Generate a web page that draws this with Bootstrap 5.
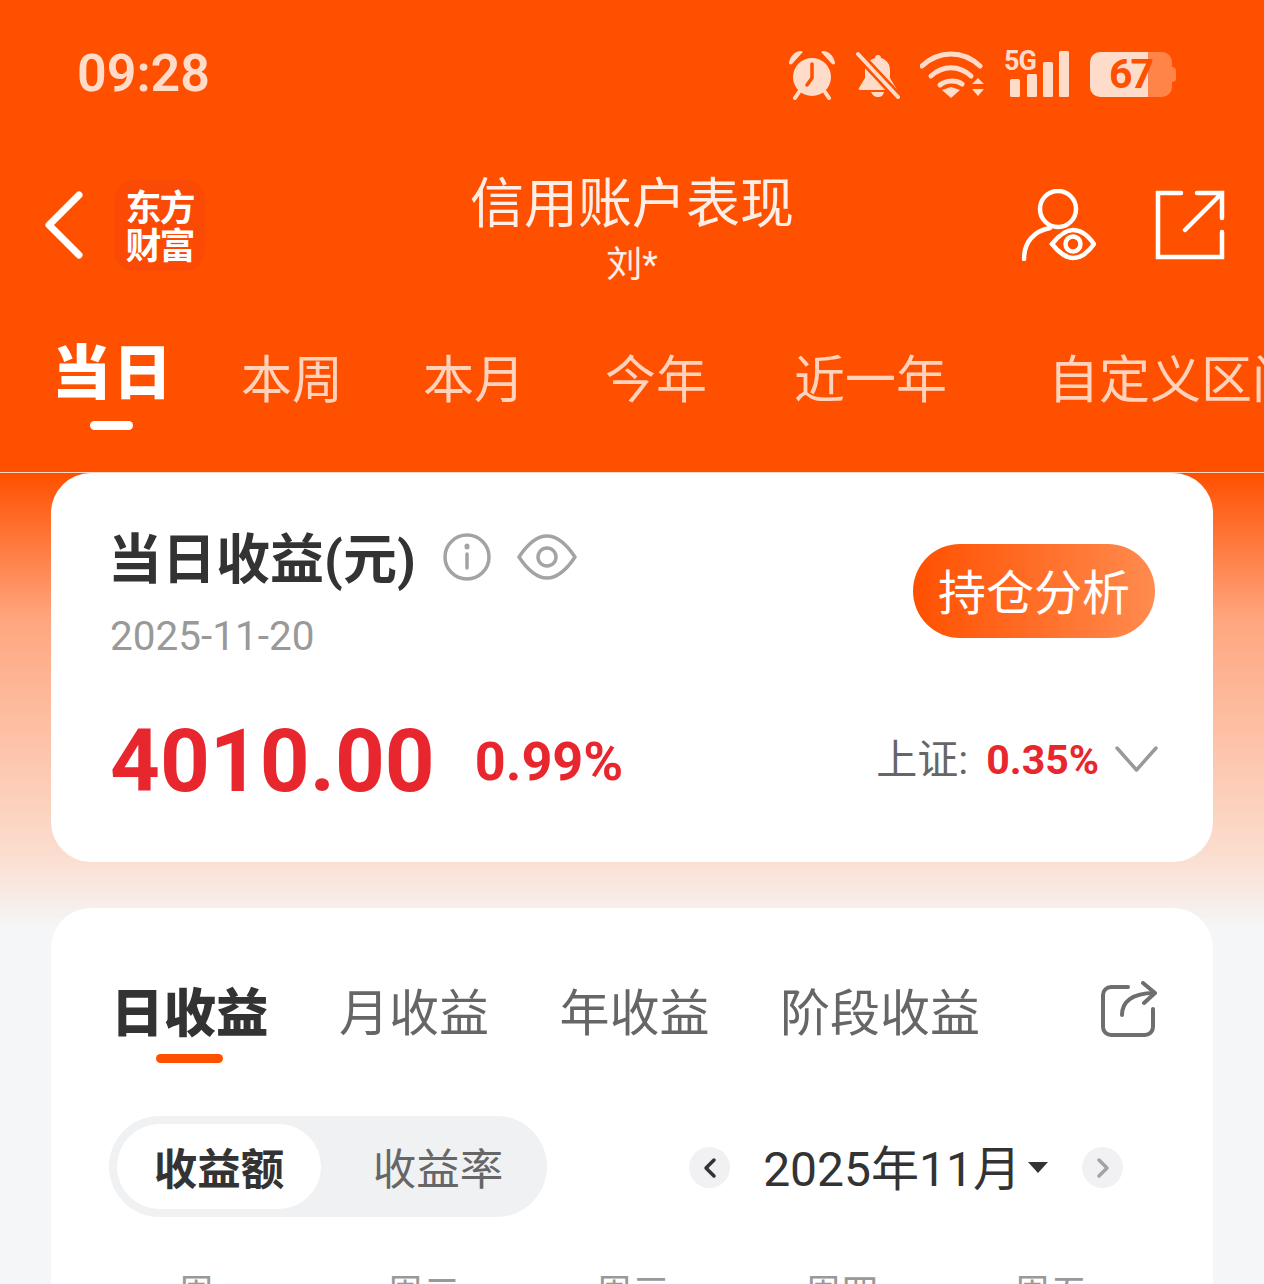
<!DOCTYPE html>
<html lang="zh-CN">
<head>
  <meta charset="UTF-8">
  <meta name="viewport" content="width=device-width, initial-scale=1.0">
  <title>信用账户表现</title>
  <link href="https://cdn.jsdelivr.net/npm/bootstrap@5.3.3/dist/css/bootstrap.min.css" rel="stylesheet">
  <style>
    html, body { height: 1284px; overflow: hidden; }
    body {
      font-family: Roboto, "Noto Sans CJK SC", sans-serif;
      background: linear-gradient(to bottom, #ff5000 473px, #ffa67f 620px, #fbdccd 850px, #f5f6f8 930px);
      color: #333;
    }
    .top-bar { height: 473px; background: #ff5000; border-bottom: 1px solid #ffd9c6; color: #fff; }
    .status-row { height: 147px; padding: 0 88px 0 77px; color: #ffdcca; }
    .clock { font-size: 52px; font-weight: 600; line-height: 1; }
    .status-icons { gap: 19px; margin-top: 2px; }
    .sig-wrap { position: relative; width: 67px; height: 46px; margin-top: -2px; }
    .sig-5g { position: absolute; left: 0; top: -3px; font-size: 27px; font-weight: 700; line-height: 27px; letter-spacing: -1px; color: #ffdcca; }
    .batt { position: relative; width: 86px; height: 45px; }
    .batt-num { position: absolute; left: 19px; top: 0; font-size: 41px; font-weight: 700; line-height: 45px; letter-spacing: -2px; color: #ff5000; }
    .title-row { height: 156px; padding: 0 39px; }
    .title-side { width: 235px; }
    .back-icon { margin-left: 5px; }
    .logo-box { width: 91px; height: 91px; margin-left: 29px; background: #fa4a05; border-radius: 20px; font-size: 36px; line-height: 38px; font-weight: 700; text-align: center; padding-top: 10px; letter-spacing: -2px; }
    .title-text { margin-top: 10px; }
    .title-main { font-size: 54px; line-height: 64px; color: #ffeee5; }
    .title-sub { font-size: 36px; line-height: 44px; margin-top: 6px; color: #ffeee5; }
    .head-share { margin-left: 59px; }
    .tab-row { height: 168px; padding: 0 0 0 52px; overflow: hidden; white-space: nowrap; color: #ffd2bb; font-size: 51px; }
    .tab-row span { display: block; line-height: 60px; margin-top: -12px; margin-right: 80px; }
    .tab-row .tab-on { font-size: 59px; font-weight: 900; letter-spacing: 2px; color: #fff; position: relative; margin-top: -26px; margin-right: 67px; }
    .tab-on::after { content: ""; position: absolute; left: 38px; top: 77px; width: 43px; height: 9px; border-radius: 5px; background: #fff; }
    .tab-row .tab-wide { margin-right: 101px; }
    .tab-row .tab-mid { margin-right: 87px; }
    .sheet { margin: 0 51px; background: #fff; border-radius: 40px; }
    .sum-card { height: 389px; padding: 55px 58px 0 59px; }
    .sum-title { font-size: 54px; font-weight: 700; line-height: 66px; margin-left: -2px; }
    .info-icon { margin: -8px 0 0 27px; }
    .seen-icon { margin: -8px 0 0 26px; }
    .sum-date { font-size: 40.5px; line-height: 48px; color: #999; margin-top: 18px; }
    .hold-btn { width: 242px; height: 94px; margin-top: 16px; border-radius: 47px; border: 0; font-size: 48px; color: #fff; background: linear-gradient(to right, #ff5000, #ff8b4f); padding: 6px 0 0; }
    .amount-row { margin-top: 51px; }
    .amount { font-size: 87px; font-weight: 700; line-height: 100px; color: #e8262e; }
    .amount-pct { font-size: 54px; font-weight: 700; color: #e8262e; margin-left: 40px; }
    .index-box { margin-right: -3px; }
    .index-label { font-size: 41px; color: #666; }
    .index-val { font-size: 41px; font-weight: 700; color: #e8262e; margin: 0 16px 0 18px; }
    .index-arrow { margin-top: -4px; }
    .chart-card { margin-top: 46px; height: 500px; padding: 0 56px 0 58px; }
    .sub-tabs { height: 208px; font-size: 50px; color: #666; padding-top: 73px; gap: 70.500px; }
    .sub-tabs > div { line-height: 66px; }
    .sub-tabs .sub-on { font-size: 52.500px; font-weight: 900; color: #333; position: relative; margin-left: 2px; }
    .sub-on::after { content: ""; position: absolute; left: 45px; top: 73px; width: 67px; height: 9px; border-radius: 5px; background: #ff5000; }
    .sub-share { margin: 0 -1px 0 0; }
    .seg { width: 438px; height: 101px; background: #f0f1f3; border-radius: 51px; padding: 8px; font-size: 43.500px; color: #666; }
    .seg-on { width: 204px; height: 85px; background: #fff; border-radius: 43px; font-weight: 700; color: #333; padding-top: 8px; }
    .seg-off { padding: 8px 0 0 16px; }
    .date-pick { padding-top: 2px; margin-right: 34px; }
    .round-btn { width: 41px; height: 41px; border-radius: 50%; background: #f1f1f3; }
    .month { font-size: 48px; line-height: 60px; padding-top: 4px; margin: 0 7px 0 33px; }
    .caret-down { width: 0; height: 0; border-left: 10px solid transparent; border-right: 10px solid transparent; border-top: 11px solid #333; margin-right: 34px; }
    .week-row { margin-top: 55px; font-size: 37px; line-height: 44px; color: #999; padding-left: 1px; }
    .week-row span { flex: 0 0 209px; text-align: center; }
  </style>
</head>
<body>

<div class="top-bar">
  <!-- status bar -->
  <div class="status-row d-flex align-items-center justify-content-between">
    <div class="clock">09:28</div>
    <div class="status-icons d-flex align-items-center">
      <svg width="48" height="50" viewBox="0 0 48 50" fill="#ffdcca">
        <path d="M1 13C2 6 7 1 13 1c2 0 2 1 1 2L4 14c-2 1-3 0-3-1zM47 13C46 6 41 1 35 1c-2 0-2 1-1 2l10 11c2 1 3 0 3-1z"/>
        <circle cx="24" cy="27" r="19"/>
        <path d="M11 42l-4 6M37 42l4 6" stroke="#ffdcca" stroke-width="4" stroke-linecap="round"/>
        <path d="M24 14v14l-5 7" fill="none" stroke="#ff5000" stroke-width="3.500" stroke-linecap="round" stroke-linejoin="round"/>
      </svg>
      <svg width="46" height="48" viewBox="0 0 46 48" fill="#ffdcca">
        <path d="M23 4c2 0 3 1 3 3 6 2 9 6 9 13v7l6 10c1 1 0 2-1 2H5c-1 0-2-1-1-2l6-10v-7c0-7 4-11 10-13 0-2 1-3 3-3z"/>
        <path d="M16 41h13c-1 4-3 5-6 5s-5-1-7-5z"/>
        <path d="M3 3l40 43" stroke="#ff5000" stroke-width="9"/>
        <path d="M3 3l40 43" stroke="#ffdcca" stroke-width="4" stroke-linecap="round"/>
      </svg>
      <svg width="65" height="48" viewBox="0 0 65 48" fill="none" stroke="#ffdcca" stroke-width="5" stroke-linecap="round">
        <path d="M2 15C19 -1 43 -1 60 15"/>
        <path d="M11 25C23 14 39 14 51 25"/>
        <path d="M20 34c6-5 16-5 22-1"/>
        <path d="M22 39l9-3 9 3-9 8z" fill="#ffdcca" stroke="none"/>
        <path d="M52 33l6-6 6 6zM52 38l6 7 6-7z" fill="#ffdcca" stroke="none"/>
      </svg>
      <div class="sig-wrap">
        <span class="sig-5g">5G</span>
        <svg class="d-block" width="67" height="46" viewBox="0 0 67 46" fill="#ffdcca">
          <rect x="6" y="28" width="10" height="18" rx="1.500"/>
          <rect x="23" y="23" width="10" height="23" rx="1.500"/>
          <rect x="39" y="11" width="10" height="35" rx="1.500"/>
          <rect x="55" y="0" width="10" height="46" rx="1.500"/>
        </svg>
      </div>
      <div class="batt">
        <svg class="d-block" width="86" height="45" viewBox="0 0 86 45">
          <path d="M0 10a10 10 0 0 1 10-10h48v45H10a10 10 0 0 1-10-10z" fill="#ffdcca"/>
          <path d="M58 0h14a10 10 0 0 1 10 10v25a10 10 0 0 1-10 10H58z" fill="#ff8448"/>
          <path d="M82 15a4 4 0 0 1 4 4v7a4 4 0 0 1-4 4z" fill="#ff8448"/>
        </svg>
        <div class="batt-num">67</div>
      </div>
    </div>
  </div>

  <!-- title -->
  <div class="title-row d-flex align-items-center justify-content-between">
    <div class="title-side d-flex align-items-center">
      <svg class="back-icon" width="41" height="68" viewBox="0 0 41 68" fill="none" stroke="#fff" stroke-width="7" stroke-linecap="round" stroke-linejoin="round">
        <path d="M35 4L5 34l30 30"/>
      </svg>
      <div class="logo-box">东方<br>财富</div>
    </div>
    <div class="title-text text-center">
      <div class="title-main">信用账户表现</div>
      <div class="title-sub">刘*</div>
    </div>
    <div class="title-side d-flex align-items-center justify-content-end">
      <svg width="74" height="72" viewBox="0 0 74 72" fill="none" stroke="#fff" stroke-width="4.500" stroke-linecap="round">
        <circle cx="36" cy="20" r="18"/>
        <path d="M2 70c0-17 10-28 26-31"/>
        <path d="M30 55c8-10 15-14 21-14s14 4 21 14c-7 10-15 14-21 14s-13-4-21-14z"/>
        <circle cx="51" cy="55" r="7.500"/>
      </svg>
      <svg class="head-share" width="70" height="70" viewBox="0 0 70 70" fill="none" stroke="#fff" stroke-width="4.500" stroke-linecap="round">
        <path d="M26 3H3v64h64V42"/>
        <path d="M42 3h25v25M67 3L30 40"/>
      </svg>
    </div>
  </div>

  <!-- period tabs -->
  <div class="tab-row d-flex align-items-center">
    <span class="tab-on">当日</span>
    <span>本周</span>
    <span>本月</span>
    <span class="tab-mid">今年</span>
    <span class="tab-wide">近一年</span>
    <span>自定义区间</span>
  </div>
</div>

<!-- summary card -->
<div class="sheet sum-card">
  <div class="d-flex justify-content-between align-items-start">
    <div>
      <div class="d-flex align-items-center">
        <div class="sum-title">当日收益(元)</div>
        <svg class="info-icon" width="48" height="48" viewBox="0 0 48 48" fill="none" stroke="#a3a3a3" stroke-width="3.500" stroke-linecap="round">
          <circle cx="24" cy="24" r="22"/>
          <path d="M24 21v14"/>
          <path d="M24 13v1" stroke-width="5"/>
        </svg>
        <svg class="seen-icon" width="60" height="46" viewBox="0 0 60 46" fill="none" stroke="#a3a3a3" stroke-width="3.500" stroke-linejoin="round">
          <path d="M2 23C12 8 22 2 30 2s18 6 28 21c-10 15-20 21-28 21S12 38 2 23z"/>
          <circle cx="30" cy="23" r="9"/>
        </svg>
      </div>
      <div class="sum-date">2025-11-20</div>
    </div>
    <button class="btn hold-btn" type="button">持仓分析</button>
  </div>
  <div class="amount-row d-flex justify-content-between align-items-center">
    <div class="d-flex align-items-center">
      <div class="amount">4010.00</div>
      <div class="amount-pct">0.99%</div>
    </div>
    <div class="index-box d-flex align-items-center">
      <span class="index-label">上证:</span>
      <span class="index-val">0.35%</span>
      <svg class="index-arrow" width="43" height="28" viewBox="0 0 43 28" fill="none" stroke="#999" stroke-width="3.500" stroke-linecap="round" stroke-linejoin="round">
        <path d="M2 3l19.500 22L41 3"/>
      </svg>
    </div>
  </div>
</div>

<!-- earnings calendar card -->
<div class="sheet chart-card">
  <div class="sub-tabs d-flex align-items-start">
    <div class="sub-on">日收益</div>
    <div>月收益</div>
    <div>年收益</div>
    <div>阶段收益</div>
    <svg class="sub-share ms-auto" width="58" height="56" viewBox="0 0 58 56" fill="none" stroke="#6e6e6e" stroke-width="4" stroke-linecap="round" stroke-linejoin="round">
      <path d="M28 6H11a8 8 0 0 0-8 8v32a8 8 0 0 0 8 8h34a8 8 0 0 0 8-8V28"/>
      <path d="M22 34c0-13 10-22 32-22"/>
      <path d="M43 2l12 10-11 10"/>
    </svg>
  </div>
  <div class="d-flex align-items-center justify-content-between">
    <div class="seg d-flex align-items-center">
      <div class="seg-on d-flex align-items-center justify-content-center">收益额</div>
      <div class="seg-off flex-fill text-center">收益率</div>
    </div>
    <div class="date-pick d-flex align-items-center">
      <div class="round-btn d-flex align-items-center justify-content-center">
        <svg width="14" height="22" viewBox="0 0 14 22" fill="none" stroke="#333" stroke-width="3.500" stroke-linecap="round" stroke-linejoin="round"><path d="M11 3l-8 8 8 8"/></svg>
      </div>
      <div class="month">2025年11月</div>
      <div class="caret-down"></div>
      <div class="round-btn d-flex align-items-center justify-content-center">
        <svg width="14" height="22" viewBox="0 0 14 22" fill="none" stroke="#a3a3a3" stroke-width="3.500" stroke-linecap="round" stroke-linejoin="round"><path d="M3 3l8 8-8 8"/></svg>
      </div>
    </div>
  </div>
  <div class="week-row d-flex">
    <span>周一</span><span>周二</span><span>周三</span><span>周四</span><span>周五</span>
  </div>
</div>

<script src="https://cdn.jsdelivr.net/npm/bootstrap@5.3.3/dist/js/bootstrap.bundle.min.js"></script>
</body>
</html>
